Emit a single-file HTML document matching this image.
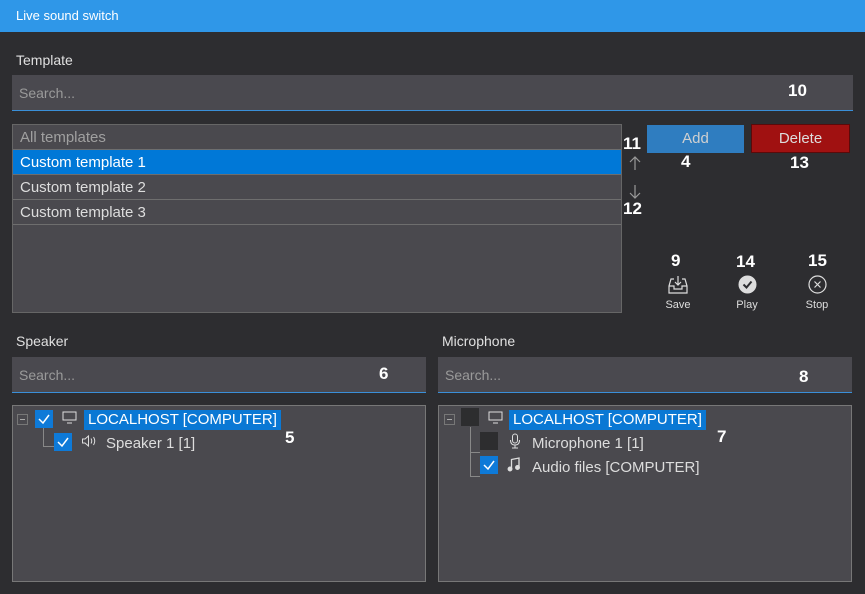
<!DOCTYPE html>
<html><head><style>
*{margin:0;padding:0;box-sizing:border-box}
body{width:865px;height:594px;background:#2d2d30;font-family:"Segoe UI","Liberation Sans",sans-serif;position:relative;overflow:hidden;color:#ddd}
.a{position:absolute}
.title{left:0;top:0;width:865px;height:32px;background:#2f97e8;color:#fff;font-size:13px;padding:8px 0 0 16px}
.lbl{font-size:14px;color:#e0e0e0}
.search{background:#4a494f;border-bottom:1px solid #3a8fd8;color:#9a9a9a;font-size:14px;padding-left:7px;display:flex;align-items:center}
.n{font-family:"Liberation Sans",Arial,sans-serif;font-weight:bold;color:#fff;font-size:17px}
.list{left:12px;top:124px;width:610px;height:189px;background:#4a494e;border:1px solid #666}
.row{height:25px;border-bottom:1px solid #6e6e6e;font-size:15px;color:#ddd;padding-left:7px;line-height:25px}
.tree{background:#4a494e;border:1px solid #777}
.cb{position:absolute;width:18px;height:18px;background:#0e7ad8}
.cb.off{background:#2d2d2f}
.hl{background:#0a78d4;color:#fff;padding:0 4px;line-height:20px}
.t{font-size:15px;position:absolute}
.ic{font-size:11px;color:#ddd;text-align:center;width:40px}
</style></head><body>
<div class="a title">Live sound switch</div>
<div class="a lbl" style="left:16px;top:52px">Template</div>
<div class="a search" style="left:12px;top:75px;width:841px;height:36px">Search...</div>
<div class="a n" style="left:788px;top:81px">10</div>
<div class="a list">
<div class="row" style="color:#a0a0a0">All templates</div>
<div class="row" style="background:#0078d7;color:#fff">Custom template 1</div>
<div class="row">Custom template 2</div>
<div class="row">Custom template 3</div>
</div>
<div class="a n" style="left:623px;top:134px">11</div>
<svg class="a" style="left:628px;top:155px" width="14" height="16" fill="none" stroke="#999" stroke-width="1.2"><path d="M7 2 V15 M2 7 L7 2 L12 7"/></svg>
<svg class="a" style="left:628px;top:184px" width="14" height="16" fill="none" stroke="#999" stroke-width="1.2"><path d="M7 1 V14 M2 9 L7 14 L12 9"/></svg>
<div class="a n" style="left:623px;top:199px">12</div>
<div class="a" style="left:647px;top:125px;width:97px;height:28px;background:#2f7dc0;color:#d0d0d0;font-size:15px;text-align:center;line-height:28px">Add</div>
<div class="a" style="left:751px;top:124px;width:99px;height:29px;background:#a01111;border:1px solid #5a0a0a;color:#ddd;font-size:15px;text-align:center;line-height:27px">Delete</div>
<div class="a n" style="left:681px;top:152px">4</div>
<div class="a n" style="left:790px;top:153px">13</div>
<div class="a n" style="left:671px;top:251px">9</div>
<div class="a n" style="left:736px;top:252px">14</div>
<div class="a n" style="left:808px;top:251px">15</div>
<svg class="a" style="left:667px;top:275px" width="22" height="20" viewBox="0 0 22 20" fill="none" stroke="#ddd" stroke-width="1.2"><path d="M7 4 H4 L2 11 V18 H20 V11 L18 4 H15 M2 11 H7 V14 H15 V11 H20 M11 1 V10 M8 7 L11 10 L14 7"/></svg>
<svg class="a" style="left:738px;top:275px" width="19" height="19"><circle cx="9.5" cy="9.5" r="9" fill="#ddd"/><path d="M5.5 9.5 L8.5 12.5 L13.5 6.5" stroke="#2d2d30" stroke-width="2" fill="none"/></svg>
<svg class="a" style="left:808px;top:275px" width="19" height="19" fill="none" stroke="#ddd" stroke-width="1.2"><circle cx="9.5" cy="9.5" r="8.5"/><path d="M6.5 6.5 L12.5 12.5 M12.5 6.5 L6.5 12.5"/></svg>
<div class="a ic" style="left:658px;top:299px">Save</div>
<div class="a ic" style="left:727px;top:299px">Play</div>
<div class="a ic" style="left:797px;top:299px">Stop</div>

<div class="a lbl" style="left:16px;top:333px">Speaker</div>
<div class="a search" style="left:12px;top:357px;width:414px;height:36px">Search...</div>
<div class="a n" style="left:379px;top:364px">6</div>
<div class="a lbl" style="left:442px;top:333px">Microphone</div>
<div class="a search" style="left:438px;top:357px;width:414px;height:36px">Search...</div>
<div class="a n" style="left:799px;top:367px">8</div>

<div class="a tree" style="left:12px;top:405px;width:414px;height:177px"></div>
<div class="a" style="left:17px;top:414px;width:11px;height:11px;border:1px solid #777"><div style="margin:4px 2px;height:1px;background:#aaa"></div></div>
<div class="a" style="left:43px;top:427px;width:12px;height:20px;border-left:1px solid #888;border-bottom:1px solid #888"></div>
<div class="cb" style="left:35px;top:410px"></div>
<div class="cb" style="left:54px;top:433px"></div>
<svg class="a" style="left:35px;top:410px" width="18" height="18"><path d="M4 9 L8 13 L14 5" stroke="#fff" stroke-width="1.5" fill="none"/></svg>
<svg class="a" style="left:54px;top:433px" width="18" height="18"><path d="M4 9 L8 13 L14 5" stroke="#fff" stroke-width="1.5" fill="none"/></svg>
<svg class="a" style="left:62px;top:411px" width="15" height="13" fill="none" stroke="#ddd"><rect x="1" y="1" width="13" height="8"/><path d="M5 12 H10"/></svg>
<svg class="a" style="left:81px;top:434px" width="16" height="14" fill="none" stroke="#ddd" stroke-width="1"><path d="M1.5 5 H4 L7.5 2 V12 L4 9 H1.5 Z M10 4.5 Q11.5 7 10 9.5 M12.5 3 Q15 7 12.5 11"/></svg>
<div class="t hl" style="left:84px;top:410px">LOCALHOST [COMPUTER]</div>
<div class="t" style="left:106px;top:435px">Speaker 1 [1]</div>
<div class="a n" style="left:285px;top:428px">5</div>

<div class="a tree" style="left:438px;top:405px;width:414px;height:177px"></div>
<div class="a" style="left:444px;top:414px;width:11px;height:11px;border:1px solid #777"><div style="margin:4px 2px;height:1px;background:#aaa"></div></div>
<div class="a" style="left:470px;top:427px;width:10px;height:50px;border-left:1px solid #888;border-bottom:1px solid #888"></div>
<div class="a" style="left:470px;top:452px;width:10px;border-top:1px solid #888"></div>
<div class="cb off" style="left:461px;top:408px"></div>
<div class="cb off" style="left:480px;top:432px"></div>
<div class="cb" style="left:480px;top:456px"></div>
<svg class="a" style="left:480px;top:456px" width="18" height="18"><path d="M4 9 L8 13 L14 5" stroke="#fff" stroke-width="1.5" fill="none"/></svg>
<svg class="a" style="left:488px;top:411px" width="15" height="13" fill="none" stroke="#ddd"><rect x="1" y="1" width="13" height="8"/><path d="M5 12 H10"/></svg>
<svg class="a" style="left:509px;top:433px" width="12" height="16" fill="none" stroke="#ddd"><rect x="3.5" y="1" width="5" height="9" rx="2.5"/><path d="M1.5 7 Q1.5 12 6 12 Q10.5 12 10.5 7 M6 12 V15 M3 15 H9"/></svg>
<svg class="a" style="left:507px;top:457px" width="14" height="15" fill="none" stroke="#ddd" stroke-width="1.3"><path d="M4.5 12 V2.5 L12 1 V10.5"/><circle cx="3" cy="12" r="1.8" fill="#ddd"/><circle cx="10.5" cy="10.5" r="1.8" fill="#ddd"/></svg>
<div class="t hl" style="left:509px;top:410px">LOCALHOST [COMPUTER]</div>
<div class="t" style="left:532px;top:435px">Microphone 1 [1]</div>
<div class="t" style="left:532px;top:459px">Audio files [COMPUTER]</div>
<div class="a n" style="left:717px;top:427px">7</div>
</body></html>
